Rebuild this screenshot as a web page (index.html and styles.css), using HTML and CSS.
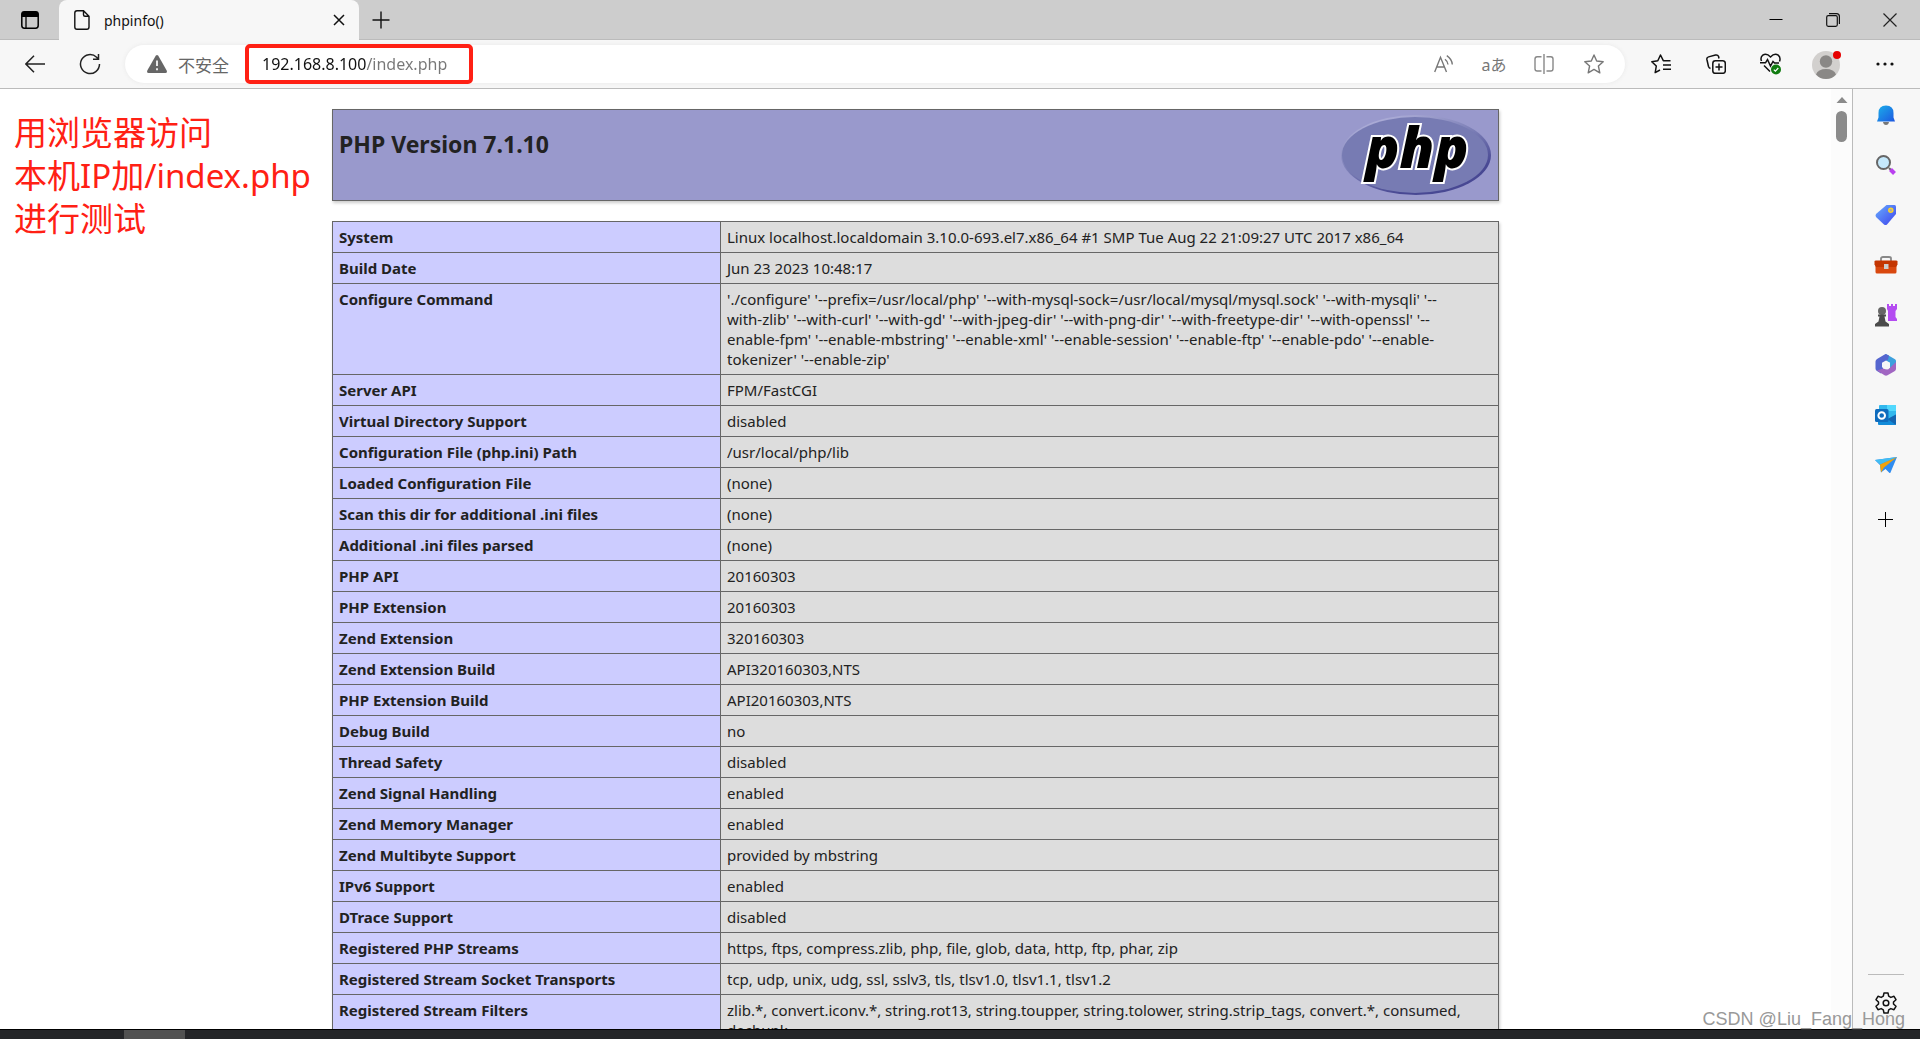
FILE: index.html
```html
<!DOCTYPE html>
<html lang="zh-CN">
<head>
<meta charset="utf-8">
<title>phpinfo()</title>
<link rel="stylesheet" href="styles.css">
</head>
<body>
<div class="browser">
  <header class="tabstrip">
    <button class="tab-actions" aria-label="标签页操作"><svg width="18" height="18" viewBox="0 0 18 18" fill="none" stroke="#000"><rect x=".8" y=".8" width="16.4" height="16.4" rx="2.6" stroke-width="1.5"/><path d="M1 3.2Q1 1 3.2 1H14.800Q17 1 17 3.200V5.500H1Z" fill="#000"/><path d="M5 5V17" stroke-width="1.300"/></svg></button>
    <div class="tab">
      <svg width="16" height="20" viewBox="0 0 16 20" fill="none" stroke="#111" stroke-width="1.400"><path d="M3 .8H9.500L15 6.300V17Q15 19.200 12.800 19.200H3Q.8 19.200 .8 17V3Q.8.8 3 .8ZM9.500.8V4.800Q9.500 6.300 11 6.300H15"/></svg>
      <span class="tab-title">phpinfo()</span>
      <button class="tab-close" aria-label="关闭标签页"><svg width="12" height="12" viewBox="0 0 12 12" stroke="#111" stroke-width="1.500"><path d="M1 1 11 11M11 1 1 11"/></svg></button>
    </div>
    <button class="new-tab" aria-label="新建标签页"><svg width="18" height="18" viewBox="0 0 18 18" stroke="#111" stroke-width="1.400"><path d="M9 .5V17.500M.5 9H17.500"/></svg></button>
    <div class="window-buttons">
      <button aria-label="最小化"><svg width="14" height="14" viewBox="0 0 14 14" stroke="#000"><path d="M.5 6.500H13.500"/></svg></button>
      <button aria-label="还原"><svg width="14" height="14" viewBox="0 0 14 14" fill="none" stroke="#111" stroke-width="1.200"><rect x=".7" y="2.700" width="10.600" height="10.600" rx="1.500"/><path d="M3 .6H10.500Q13.400.6 13.400 3.500V11"/></svg></button>
      <button aria-label="关闭"><svg width="14" height="14" viewBox="0 0 14 14" stroke="#222" stroke-width="1.200"><path d="M.5.5 13.500 13.500M13.500.5.5 13.500"/></svg></button>
    </div>
  </header>

  <nav class="toolbar">
    <button class="tool" aria-label="后退"><svg width="20" height="18" viewBox="0 0 20 18" fill="none" stroke="#222" stroke-width="1.500"><path d="M20 9H1M9 .8.9 9 9 17.200"/></svg></button>
    <button class="tool" aria-label="刷新"><svg width="22" height="22" viewBox="0 0 22 22" fill="none" stroke="#222" stroke-width="1.500"><path d="M20.500 11A9.500 9.500 0 1 1 17.600 4.200L19.300 6M19.500 1V6.300H14"/></svg></button>
    <div class="address">
      <svg class="warn" width="20" height="18" viewBox="0 0 20 18"><path d="M8.700.8Q10-.8 11.300.8L19.700 15.500Q20.500 18 18.500 18H1.500Q-.5 18 .3 15.500Z" fill="#666"/><path d="M10 5.500V11M10 13.300V15.300" stroke="#fff" stroke-width="1.700"/></svg>
      <span class="insecure">不安全</span>
      <div class="url-mark"><input class="url" type="text" aria-label="地址栏" value="192.168.8.100/index.php"></div>
      <button class="action" aria-label="大声朗读"><svg width="20" height="18" viewBox="0 0 20 18" fill="none" stroke="#777" stroke-width="1.400"><path d="M.7 17 6.500 2.300 12.500 17M2.800 12H10.400M11 4.200Q13.500 6 14 9.500M12.800.7Q17.800 4 18.300 9.500" /></svg></button>
      <button class="action translate" aria-label="翻译">aあ</button>
      <button class="action" aria-label="分屏"><svg width="20" height="20" viewBox="0 0 20 20" fill="none" stroke="#888" stroke-width="1.400"><path d="M10 0V20M7.500 2.700H3.200Q1 2.700 1 5V14.800Q1 17 3.200 17H7.500M12.500 2.700H16.800Q19 2.700 19 5V14.800Q19 17 16.800 17H12.500"/></svg></button>
      <button class="action" aria-label="收藏"><svg width="20" height="20" viewBox="0 0 20 20" fill="none" stroke="#777" stroke-width="1.400" stroke-linejoin="round"><path d="M10 1 12.700 7 19.200 7.700 14.400 12 15.800 18.800 10 15.400 4.200 18.800 5.600 12 .8 7.700 7.300 7Z"/></svg></button>
    </div>
    <div class="tools-right">
      <button class="tool" aria-label="收藏夹"><svg width="20" height="20" viewBox="0 0 20 20" fill="none" stroke="#111" stroke-width="1.500" stroke-linejoin="round"><path d="M19.500 6.700H12.300L9.500 1 6.800 6.800.8 7.700 5.300 12 4.200 18.600 9 16M12 11H20M12 15.300H20"/></svg></button>
      <button class="tool" aria-label="集锦"><svg width="20" height="20" viewBox="0 0 20 20" fill="none" stroke="#111" stroke-width="1.500"><rect x="6.800" y="6.800" width="12.500" height="12.500" rx="2.600"/><path d="M13 9.500V16.500M9.500 13H16.500M4.500 14.500Q3 14 2.500 12.500L.9 5.500Q.5 3.500 2.600 2.900L9.500 1Q11.700.5 12.500 2.300L13 4.500"/></svg></button>
      <button class="tool" aria-label="浏览器概要"><svg width="22" height="22" viewBox="0 0 22 22" fill="none" stroke="#111" stroke-width="1.500"><path d="M1.500 8Q0 4.500 2.800 2.200Q6.500-.3 10.500 4Q14.500-.3 18.200 2.200Q21 4.500 19.500 8.500M0 9.800H5.500L7.500 6.500 10.500 13 13 8.500 14.500 10H19M4 12.500 10 18.500"/><circle cx="16" cy="16.500" r="5" fill="#107c10" stroke="none"/><path d="M13.800 16.600 15.400 18.100 18.300 15" stroke="#fff" stroke-width="1.200"/></svg></button>
      <button class="tool avatar" aria-label="个人资料"><svg width="32" height="30" viewBox="0 0 32 30"><circle cx="14" cy="16" r="14" fill="#d2d0ce"/><circle cx="14" cy="12.500" r="6.200" fill="#8a8886"/><path d="M4 25.500Q6 20 14 20T24 25.500Q20 30 14 30T4 25.500Z" fill="#8a8886"/><circle cx="25" cy="6" r="4" fill="#e60000"/></svg></button>
      <button class="tool" aria-label="设置及其他"><svg width="18" height="4" viewBox="0 0 18 4" fill="#111"><circle cx="2" cy="2" r="1.600"/><circle cx="9" cy="2" r="1.600"/><circle cx="16" cy="2" r="1.600"/></svg></button>
    </div>
  </nav>

  <div class="body">
    <main class="page">
      <p class="note">用浏览器访问<br>本机IP加/index.php<br>进行测试</p>
      <div class="info">
        <div class="banner">
          <h1>PHP Version 7.1.10</h1>
          <a href="#php" aria-label="PHP"><svg class="logo" width="152" height="82" viewBox="0 0 152 82">
            <defs><linearGradient id="rim" x1=".2" y1="0" x2=".8" y2="1"><stop offset="0" stop-color="#b4b4dc"/><stop offset=".45" stop-color="#7a7db5"/><stop offset=".8" stop-color="#484893"/></linearGradient></defs>
            <ellipse cx="76" cy="41" rx="75" ry="40" fill="url(#rim)"/><ellipse cx="75" cy="41" rx="73" ry="38" fill="#777bb3"/>
            <text class="logo-text" x="77" y="54" text-anchor="middle">php</text></svg></a>
        </div>
        <table>
          <tr><th scope="row">System</th><td>Linux localhost.localdomain 3.10.0-693.el7.x86_64 #1 SMP Tue Aug 22 21:09:27 UTC 2017 x86_64</td></tr>
          <tr><th scope="row">Build Date</th><td>Jun 23 2023 10:48:17</td></tr>
          <tr><th scope="row">Configure Command</th><td>'./configure' '--prefix=/usr/local/php' '--with-mysql-sock=/usr/local/mysql/mysql.sock' '--with-mysqli' '--<br>with-zlib' '--with-curl' '--with-gd' '--with-jpeg-dir' '--with-png-dir' '--with-freetype-dir' '--with-openssl' '--<br>enable-fpm' '--enable-mbstring' '--enable-xml' '--enable-session' '--enable-ftp' '--enable-pdo' '--enable-<br>tokenizer' '--enable-zip'</td></tr>
          <tr><th scope="row">Server API</th><td>FPM/FastCGI</td></tr>
          <tr><th scope="row">Virtual Directory Support</th><td>disabled</td></tr>
          <tr><th scope="row">Configuration File (php.ini) Path</th><td>/usr/local/php/lib</td></tr>
          <tr><th scope="row">Loaded Configuration File</th><td>(none)</td></tr>
          <tr><th scope="row">Scan this dir for additional .ini files</th><td>(none)</td></tr>
          <tr><th scope="row">Additional .ini files parsed</th><td>(none)</td></tr>
          <tr><th scope="row">PHP API</th><td>20160303</td></tr>
          <tr><th scope="row">PHP Extension</th><td>20160303</td></tr>
          <tr><th scope="row">Zend Extension</th><td>320160303</td></tr>
          <tr><th scope="row">Zend Extension Build</th><td>API320160303,NTS</td></tr>
          <tr><th scope="row">PHP Extension Build</th><td>API20160303,NTS</td></tr>
          <tr><th scope="row">Debug Build</th><td>no</td></tr>
          <tr><th scope="row">Thread Safety</th><td>disabled</td></tr>
          <tr><th scope="row">Zend Signal Handling</th><td>enabled</td></tr>
          <tr><th scope="row">Zend Memory Manager</th><td>enabled</td></tr>
          <tr><th scope="row">Zend Multibyte Support</th><td>provided by mbstring</td></tr>
          <tr><th scope="row">IPv6 Support</th><td>enabled</td></tr>
          <tr><th scope="row">DTrace Support</th><td>disabled</td></tr>
          <tr><th scope="row">Registered PHP Streams</th><td>https, ftps, compress.zlib, php, file, glob, data, http, ftp, phar, zip</td></tr>
          <tr><th scope="row">Registered Stream Socket Transports</th><td>tcp, udp, unix, udg, ssl, sslv3, tls, tlsv1.0, tlsv1.1, tlsv1.2</td></tr>
          <tr><th scope="row">Registered Stream Filters</th><td>zlib.*, convert.iconv.*, string.rot13, string.toupper, string.tolower, string.strip_tags, convert.*, consumed,<br>dechunk</td></tr>
        </table>
      </div>
    </main>
    <div class="scrollbar"><svg width="12" height="6" viewBox="0 0 12 6"><path d="M6 0 11.500 6H.5Z" fill="#8b8b8b"/></svg><div class="thumb"></div></div>
    <aside class="sidebar">
      <button aria-label="通知"><svg width="22" height="22" viewBox="0 0 22 22"><defs><linearGradient id="bell" x1="0" y1="0" x2="1" y2="1"><stop stop-color="#1bb0ea"/><stop offset="1" stop-color="#1d56e0"/></linearGradient></defs><path d="M8 18H14Q13.500 21 11 21T8 18Z" fill="#777"/><path d="M3.500 9Q3.500 1.500 11 1.500T18.500 9V13.500L20 17.500H2L3.500 13.500Z" fill="url(#bell)"/></svg></button>
      <button aria-label="搜索"><svg width="22" height="22" viewBox="0 0 22 22"><path d="M14 14 16 16" stroke="#666" stroke-width="2"/><path d="M15.500 15.500 19.500 19.500" stroke="#b940ef" stroke-width="4"/><circle cx="8.500" cy="8.500" r="6.500" fill="#c5e9fc" stroke="#666" stroke-width="2"/></svg></button>
      <button aria-label="购物"><svg width="22" height="22" viewBox="0 0 22 22"><defs><linearGradient id="tag" x1="0" y1="0" x2="1" y2="1"><stop stop-color="#68aefe"/><stop offset="1" stop-color="#3e42ec"/></linearGradient></defs><path d="M11.500 1H19.500Q21 1 21 2.500V10L12 20.500Q10.500 21.500 9 20.500L1 13Q0 11.500 1 10Z" fill="url(#tag)"/><circle cx="15.800" cy="6.200" r="2" fill="#aaa" stroke="#fbd22a" stroke-width="1.500"/></svg></button>
      <button aria-label="工具"><svg width="24" height="20" viewBox="0 0 24 20"><path d="M7 6V3.500Q7 2 9 2H15Q17 2 17 3.500V6" fill="none" stroke="#888" stroke-width="1.800"/><rect x="1.500" y="9" width="21" height="9.500" rx="1.500" fill="#d9480f"/><path d="M.5 6.500Q.5 5.500 2 5.500H22Q23.500 5.500 23.500 6.500V9.500L22 12H2L.5 9.500Z" fill="#c43501"/><rect x="10" y="9" width="4.500" height="5" fill="#ccc"/></svg></button>
      <button aria-label="游戏"><svg width="24" height="24" viewBox="0 0 24 24"><path d="M13 1H15V3H17V1H19V3H21V1H23V6L21.500 8V14L23 16V18H14V8L13 6Z" fill="#b44cf1"/><circle cx="8" cy="8" r="4" fill="#666"/><path d="M4 11.500H12V13.500H10.500L11.500 18.500 15 21V23.500H1V21L4.500 18.500 5.500 13.500H4Z" fill="#4b4b4b"/></svg></button>
      <button aria-label="Microsoft 365"><svg width="22" height="22" viewBox="0 0 22 22"><path d="M11 0 20 5.200Q21 6 21 7V13L15 16V9L9 6 3 9Z" fill="#3da0dd"/><path d="M10.500 0 2 5Q.5 6 .5 7.500V14.500Q.5 16 2 17L6 19.500 8 17V9L13 5.500 14 1.500Z" fill="#5566cf"/><path d="M2 16.500 8 14.500 13 15.500 19 10 21 8V15Q21 16.500 19.500 17.200L12.500 21.300Q11 22 9.500 21.300Z" fill="#a166c2"/><path d="M11 6.500 15 8.700V13.300L11 15.500 7 13.300V8.700Z" fill="#f7f7f7"/></svg></button>
      <button aria-label="Outlook"><svg width="22" height="22" viewBox="0 0 22 22"><rect x="4" y="1" width="17" height="15" rx="1" fill="#32b8ed"/><path d="M12 1H21V7H12Z" fill="#52d8fd"/><path d="M3 13 12 16 21 10.500V20Q21 21 20 21H4Q3 21 3 20Z" fill="#128bd9"/><path d="M21 10.500V21L12.500 15Z" fill="#1465b1"/><rect x="0" y="5" width="13.500" height="13" rx="1.500" fill="#0f6cbd"/><circle cx="6.700" cy="11.500" r="3.300" fill="none" stroke="#fff" stroke-width="2"/></svg></button>
      <button aria-label="投递"><svg width="22" height="18" viewBox="0 0 22 18"><path d="M0 4 22 1 15.500 16.500Q15 17.500 14 16.500L10.500 13 6 16.500 5 9Z" fill="#2f8cf0"/><path d="M0 4 22 1 5 8.500Z" fill="#42bdf2"/><path d="M5 8.500 22 1 9 11.500 6 16.500Z" fill="#f1a20b"/></svg></button>
      <button class="add" aria-label="自定义"><svg width="15" height="15" viewBox="0 0 15 15" stroke="#000" stroke-width="1"><path d="M7.500 0V15M0 7.500H15"/></svg></button>
      <div class="settings"><button aria-label="设置"><svg width="22" height="22" viewBox="0 0 22 22" fill="none" stroke="#111" stroke-width="1.500" stroke-linejoin="round"><path d="M9 1H13L13.700 4.200 15.800 5.400 19 4.300 21 7.700 18.500 10V12L21 14.300 19 17.700 15.800 16.600 13.700 17.800 13 21H9L8.300 17.800 6.200 16.600 3 17.700 1 14.300 3.500 12V10L1 7.700 3 4.300 6.200 5.400 8.300 4.200Z"/><circle cx="11" cy="11" r="2.800"/></svg></button></div>
    </aside>
    <span class="watermark">CSDN @Liu_Fang_Hong</span>
  </div>
  <footer class="taskbar"><div class="task-active"></div><time class="clock">11:05</time></footer>
</div>
</body>
</html>
```

FILE: styles.css
```css
* { box-sizing: border-box; }
body { margin: 0; font-family: "Noto Sans", "Noto Sans CJK SC", sans-serif; color: #222; background: #fff; }
button { border: 0; padding: 0; background: none; display: flex; align-items: center; justify-content: center; flex: none; }
svg { display: block; flex: none; }
.browser { height: 100vh; display: flex; flex-direction: column; overflow: hidden; }

.tabstrip { flex: none; height: 40px; padding-right: 2px; display: flex; background: #cdcdcd; box-shadow: inset 0 -1px #bbb; }
.tab-actions { width: 59px; }
.tab { width: 300px; display: flex; align-items: center; gap: 14px; padding: 0 14px 0 15px; background: #f7f7f7; border-radius: 8px 8px 0 0; }
.tab-title { flex: 1; font-size: 14px; color: #111; }
.new-tab { width: 44px; }
.window-buttons { margin-left: auto; display: flex; }
.window-buttons button { width: 57px; }

.toolbar { flex: none; height: 49px; padding: 0 8px 0 7px; display: flex; align-items: center; background: #f7f7f7; border-bottom: 1px solid #bbb; }
.tool { width: 55px; height: 40px; }
.address { flex: 1; margin-left: 8px; height: 38px; display: flex; align-items: center; padding: 0 6px 0 22px; background: #fff; border-radius: 19px; box-shadow: 0 0 4px #e8e8e8; }
.insecure { margin: 0 16px 0 11px; font-size: 17px; color: #666; }
.url-mark { width: 228px; height: 40px; padding: 0 13px; border: 4px solid #ff2014; border-radius: 5px; display: flex; margin-right: auto; }
.url { width: 100%; padding: 0; border: 0; outline: 0; font: 16px "Noto Sans", sans-serif; color: transparent; background: linear-gradient(to right, #111 104px, #777 104px); background-clip: text; -webkit-background-clip: text; }
.action { width: 50px; height: 36px; }
.translate { font: 16px "Noto Sans", "Noto Sans CJK JP", sans-serif; color: #777; }
.tools-right { display: flex; padding-left: 8px; }
.avatar { width: 59px; }

.body { flex: 1; min-height: 0; display: flex; position: relative; }
.page { flex: 1; position: relative; overflow: hidden; }
.note { position: absolute; left: 14px; top: 22px; margin: 0; font-size: 33px; line-height: 43px; color: #ff2014; }
.info { max-width: 1167px; margin: 20px auto; }
.banner { height: 92px; display: flex; justify-content: space-between; padding: 4px 6px; background: #9999cc; border: 1px solid #666; box-shadow: 1px 2px 3px #ccc; }
.banner h1 { margin: 14px 0 0; font-size: 23px; line-height: 32px; }
.logo { overflow: visible; }
.logo-text { font: italic 800 56px "Open Sans", sans-serif; fill: #000; stroke: #fff; stroke-width: 4px; paint-order: stroke; }
table { width: 100%; margin-top: 20px; border-collapse: collapse; table-layout: fixed; box-shadow: 1px 2px 3px #ccc; font-size: 15px; line-height: 20px; }
th, td { padding: 5px 6px; border: 1px solid #666; vertical-align: top; text-align: left; white-space: nowrap; }
th { width: 388px; background: #ccccff; }
td { background: #dddddd; }

.scrollbar { flex: none; width: 22px; padding-top: 8px; display: flex; flex-direction: column; align-items: center; gap: 8px; background: #fcfcfc; border-right: 1px solid #bbb; }
.thumb { width: 11px; height: 31px; border-radius: 6px; background: #8b8b8b; }
.sidebar { flex: none; width: 67px; padding: 1px 2px 0 0; display: flex; flex-direction: column; align-items: center; background: #f7f7f7; }
.sidebar button { width: 50px; height: 50px; }
.sidebar .add { height: 58px; }
.settings { margin-top: auto; width: 36px; height: 55px; border-top: 1px solid #bbb; display: flex; justify-content: center; }
.settings button { height: 56px; }
.watermark { position: absolute; right: 15px; bottom: 0; font: 18px/20px "Liberation Sans", sans-serif; color: #999; }
.taskbar { flex: none; height: 10px; padding: 0 94px 0 124px; display: flex; justify-content: space-between; align-items: flex-start; overflow: hidden; background: #242528; border-top: 1px solid #000; }
.task-active { width: 61px; height: 9px; background: #515151; }
.clock { padding-top: 4px; font-size: 13px; line-height: 18px; color: #fff; }
```
